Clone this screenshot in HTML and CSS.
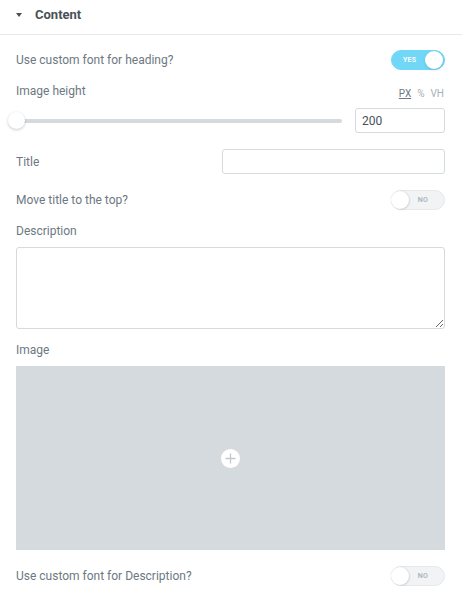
FILE: index.html
```html
<!DOCTYPE html>
<html>
<head>
<meta charset="utf-8">
<link rel="stylesheet" href="styles.css">
</head>
<body>
<div class="panel">
  <div class="section-head">
    <span class="caret"></span>
    <span class="section-title">Content</span>
  </div>
  <div class="controls">
    <div class="row row-toggle first">
      <span class="label">Use custom font for heading?</span>
      <span class="switch on"><span class="switch-text">YES</span><span class="knob"></span></span>
    </div>
    <div class="row row-label">
      <span class="label">Image height</span>
      <span class="units"><span class="unit active">PX</span><span class="unit">%</span><span class="unit">VH</span></span>
    </div>
    <div class="row row-slider">
      <div class="slider"><div class="track"><span class="thumb"></span></div></div>
      <input class="num" type="text" value="200">
    </div>
    <div class="row row-input">
      <span class="label">Title</span>
      <input class="text" type="text">
    </div>
    <div class="row row-toggle">
      <span class="label">Move title to the top?</span>
      <span class="switch off"><span class="knob"></span><span class="switch-text">NO</span></span>
    </div>
    <div class="row row-label">
      <span class="label">Description</span>
    </div>
    <textarea class="area"></textarea>
    <div class="row row-label">
      <span class="label">Image</span>
    </div>
    <div class="media">
      <span class="add">
        <svg width="19" height="19" viewBox="0 0 19 19"><circle cx="9.5" cy="9.5" r="9.5" fill="#fff"/><path d="M9.5 4.5v10M4.5 9.5h10" stroke="#c2c8ce" stroke-width="1.3"/></svg>
      </span>
    </div>
    <div class="row row-toggle last">
      <span class="label">Use custom font for Description?</span>
      <span class="switch off"><span class="knob"></span><span class="switch-text">NO</span></span>
    </div>
  </div>
</div>
</body>
</html>
```

FILE: styles.css
```css
html, body {
  margin: 0;
  padding: 0;
  background: #fff;
}
body {
  font-family: Roboto, "Liberation Sans", sans-serif;
  font-size: 12px;
  color: #6d7882;
}
.panel {
  width: 462px;
}
.section-head {
  display: flex;
  align-items: center;
  height: 15px;
  padding: 7px 0 12px 16px;
  border-bottom: 1px solid #e6e9ec;
}
.caret {
  width: 0;
  height: 0;
  border-left: 3.5px solid transparent;
  border-right: 3.5px solid transparent;
  border-top: 4px solid #495157;
  margin-right: 13px;
}
.section-title {
  font-size: 13px;
  font-weight: 700;
  color: #495157;
}
.controls {
  padding: 0 17px 0 16px;
  display: flex;
  flex-direction: column;
}
.row {
  display: flex;
  align-items: center;
  justify-content: space-between;
}
.label {
  line-height: 20px;
}
.row-toggle {
  height: 20px;
  margin-top: 16px;
}
.row-toggle.first {
  margin-top: 15px;
}
.row-label {
  height: 20px;
  margin-top: 11px;
}
.row-slider {
  margin-top: 7px;
  height: 25px;
}
.row-input {
  margin-top: 16px;
  height: 25px;
}
.switch {
  position: relative;
  box-sizing: border-box;
  width: 54px;
  height: 20px;
  border-radius: 10px;
  display: flex;
  align-items: center;
  font-size: 7px;
  font-weight: 700;
  letter-spacing: 0.2px;
}
.switch.on {
  background: #71d7f7;
  color: #fff;
  padding: 0 1px 0 11px;
  justify-content: space-between;
  border: 1px solid #71d7f7;
}
.switch.off {
  background: #f1f3f5;
  border: 1px solid #e6e9ec;
  color: #a4afb7;
  padding: 0 16px 0 0;
  justify-content: space-between;
  font-weight: 500;
}
.knob {
  width: 18px;
  height: 18px;
  border-radius: 50%;
  background: #fff;
  box-shadow: 0 1px 3px rgba(0, 0, 0, 0.12);
}
.switch.off .knob {
  margin-left: -1px;
  box-shadow: 0 0 2px rgba(0, 0, 0, 0.12), 1px 1px 2px rgba(0, 0, 0, 0.08);
}
.units {
  display: flex;
  gap: 6px;
  font-size: 10px;
  color: #a4afb7;
  padding-top: 4px;
  padding-right: 1px;
}
.unit.active {
  color: #6d7882;
  text-decoration: underline;
}
.slider {
  flex: 1;
  margin-right: 13px;
  display: flex;
  align-items: center;
}
.track {
  position: relative;
  width: 100%;
  height: 4px;
  border-radius: 2px;
  background: #d5dadf;
}
.thumb {
  position: absolute;
  left: -8px;
  top: -7px;
  width: 17px;
  height: 17px;
  border-radius: 50%;
  background: #fff;
  box-shadow: 0 1px 3px rgba(0, 0, 0, 0.22);
}
input, textarea {
  font-family: Roboto, "Liberation Sans", sans-serif;
  font-size: 12px;
  color: #495157;
  border: 1px solid #d5dadf;
  border-radius: 3px;
  box-sizing: border-box;
  outline: none;
  background: #fff;
  margin: 0;
}
.num {
  width: 90px;
  height: 25px;
  padding: 0 6px;
}
.text {
  width: 223px;
  height: 25px;
  padding: 0 6px;
}
.area {
  display: block;
  width: 429px;
  height: 82px;
  margin-top: 6px;
  resize: vertical;
}
.media {
  margin-top: 6px;
  height: 184px;
  background: #d5dadf;
  display: flex;
  align-items: center;
  justify-content: center;
}
.add {
  display: flex;
}
.add svg {
  display: block;
}
```
